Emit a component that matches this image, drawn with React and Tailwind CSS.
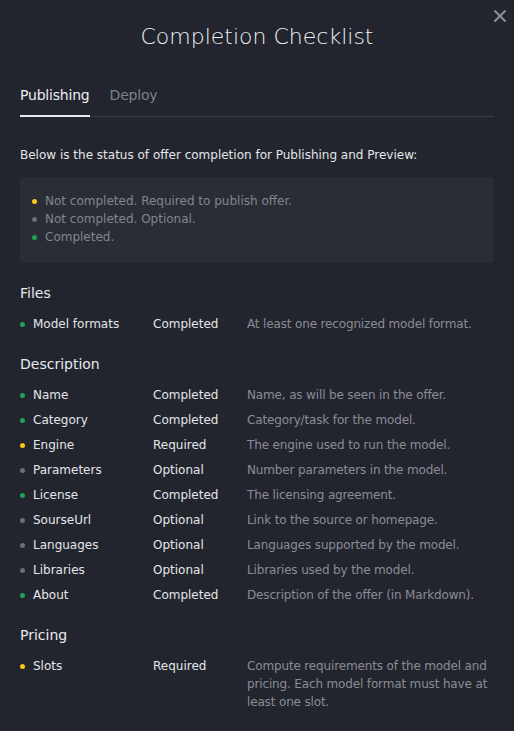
import { X } from 'lucide-react';

const dot = {
  done: 'bg-[#1fa055]',
  required: 'bg-[#f8c51c]',
  optional: 'bg-[#6b6e77]',
};

const label = {
  done: 'Completed',
  required: 'Required',
  optional: 'Optional',
};

const sections = [
  {
    title: 'Files',
    rows: [['Model formats', 'done', 'At least one recognized model format.']],
  },
  {
    title: 'Description',
    rows: [
      ['Name', 'done', 'Name, as will be seen in the offer.'],
      ['Category', 'done', 'Category/task for the model.'],
      ['Engine', 'required', 'The engine used to run the model.'],
      ['Parameters', 'optional', 'Number parameters in the model.'],
      ['License', 'done', 'The licensing agreement.'],
      ['SourseUrl', 'optional', 'Link to the source or homepage.'],
      ['Languages', 'optional', 'Languages supported by the model.'],
      ['Libraries', 'optional', 'Libraries used by the model.'],
      ['About', 'done', 'Description of the offer (in Markdown).'],
    ],
  },
  {
    title: 'Pricing',
    rows: [
      ['Slots', 'required', 'Compute requirements of the model and pricing. Each model format must have at least one slot.'],
    ],
  },
];

function Row({ name, status, text }) {
  return (
    <div className="flex text-xs leading-[18px]">
      <div className="w-[133px] flex items-start shrink-0">
        <span className={`mt-[7px] h-[5px] w-[5px] rounded-full ${dot[status]}`} />
        <span className="ml-2 text-[#e4e5e8]">{name}</span>
      </div>
      <div className="w-[94px] shrink-0 text-[#e4e5e8]">{label[status]}</div>
      <div className="flex-1 text-[#8a8c94] tracking-[-0.15px]">{text}</div>
    </div>
  );
}

export default function App() {
  return (
    <div
      className="relative w-[514px] min-h-[731px] bg-[#22252e] px-5 pb-6"
      style={{ fontFamily: '"DejaVu Sans", "Noto Sans", sans-serif' }}
    >
      <button className="absolute top-[6px] right-[4px] text-[#8b8d96]">
        <X size={20} strokeWidth={2.5} />
      </button>

      <h1 className="pt-[23px] text-center text-[22px] leading-[28px] font-light text-[#f0f1f3]">
        Completion Checklist
      </h1>

      <div className="mt-[34px] flex border-b border-[#3a3d46]">
        <div className="relative pb-[11px] text-sm leading-5 tracking-[-0.2px] text-[#eceef0]">
          Publishing
          <span className="absolute left-0 right-0 -bottom-px h-[2px] bg-[#e8e9ec]" />
        </div>
        <div className="ml-5 pb-[11px] text-sm leading-5 tracking-[-0.2px] text-[#7e8089]">Deploy</div>
      </div>

      <p className="mt-[29px] text-xs leading-[18px] text-[#e4e5e8]">
        Below is the status of offer completion for Publishing and Preview:
      </p>

      <div className="mt-[13px] rounded bg-[#2a2d36] pl-3 pt-[15px] pb-[17px] text-xs leading-[18px] text-[#83858d]">
        {[
          ['required', 'Not completed. Required to publish offer.'],
          ['optional', 'Not completed. Optional.'],
          ['done', 'Completed.'],
        ].map(([s, t]) => (
          <div key={t} className="flex items-center">
            <span className={`h-[5px] w-[5px] rounded-full ${dot[s]}`} />
            <span className="ml-2">{t}</span>
          </div>
        ))}
      </div>

      {sections.map((sec, i) => (
        <section key={sec.title} className={i === 0 ? 'mt-5' : 'mt-[21px]'}>
          <h2 className="text-sm leading-5 text-[#e8e9ec]">{sec.title}</h2>
          <div className="mt-3 flex flex-col gap-[7px]">
            {sec.rows.map(([n, s, t]) => (
              <Row key={n} name={n} status={s} text={t} />
            ))}
          </div>
        </section>
      ))}
    </div>
  );
}
